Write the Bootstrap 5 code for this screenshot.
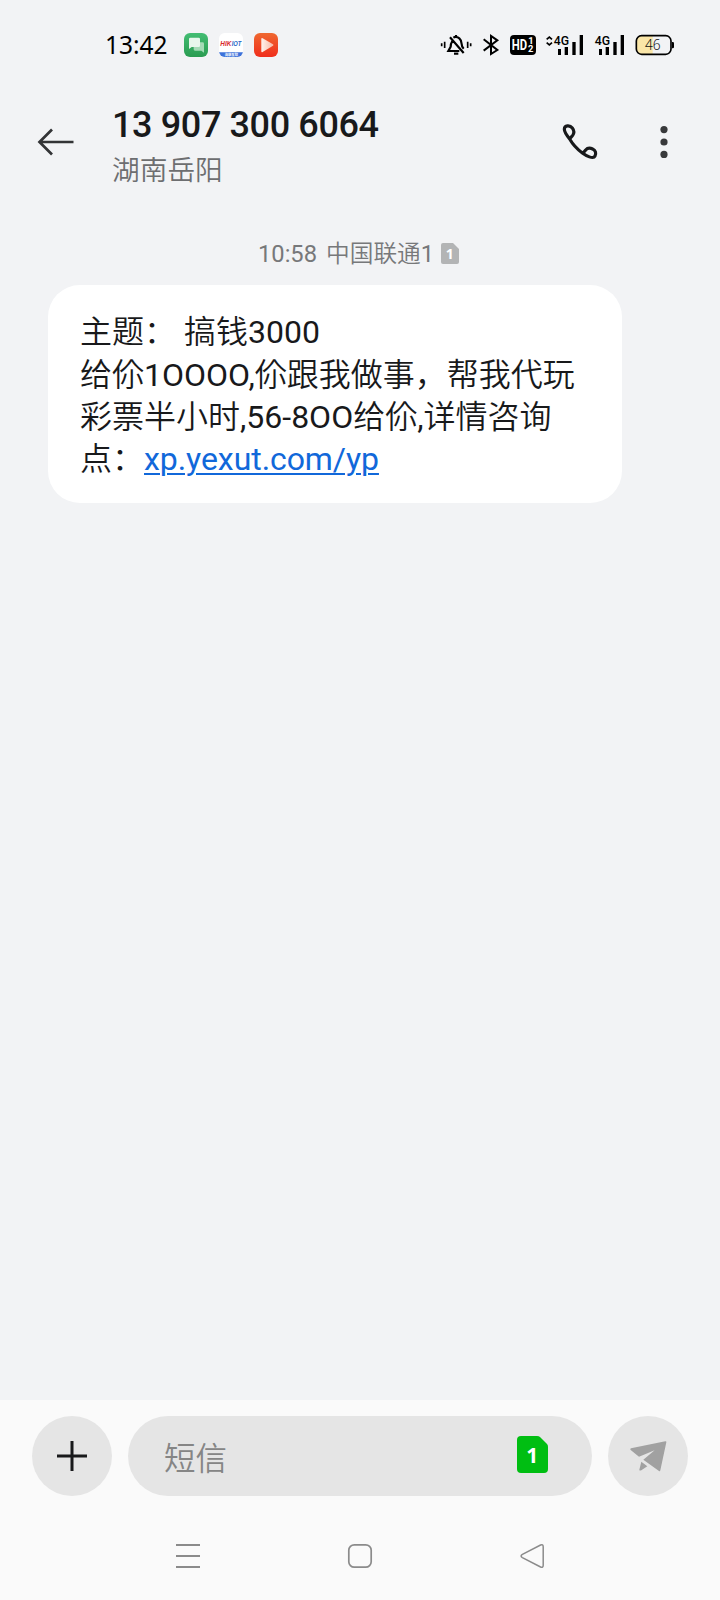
<!DOCTYPE html>
<html lang="zh-CN">
<head>
<meta charset="utf-8">
<meta name="viewport" content="width=device-width, initial-scale=1">
<title>13 907 300 6064</title>
<link href="https://cdn.jsdelivr.net/npm/bootstrap@5.3.0/dist/css/bootstrap.min.css" rel="stylesheet">
<style>
body{background:#f2f3f5;color:#18191b;font-family:Roboto,"Noto Sans CJK SC",sans-serif}
svg{display:block;flex:none;overflow:visible}
.phone-screen{width:720px;height:1600px}
.status-bar{height:90px;padding:0 45px 0 105px}
.clock{font:24.5px/24px "Noto Sans",sans-serif;width:79px;color:#000}
.top-bar{height:103px;padding-left:38px;padding-right:52px}
.contact{margin-left:38px;width:450px}
.contact h1{font-size:36px;font-weight:500;line-height:42px;margin:14px 0 0;letter-spacing:-.38px;color:#18191b}
.contact p{font-size:27.7px;line-height:40px;margin:5px 0 0;color:#6d6e70;font-weight:350}
.stamp{height:32px;margin-top:45px;padding-left:258px;font-size:23.7px;line-height:32px;color:#77787a}
.cjk{font-weight:350}
.cjk b{font-weight:400}
.bubble{width:574px;height:218px;margin:15px 0 0 48px;padding:26px 32px;border-radius:32px;font-size:32px}
.bubble p{line-height:42px;height:42px;margin:0;white-space:pre}
.bubble p:first-child{height:43px}
.bubble a{color:#1168da;text-decoration-thickness:2px;text-underline-offset:3px;letter-spacing:-.07px}
.dock{height:200px;background:#fafafa}
.composer{padding:16px 32px 0;gap:16px}
.pill{background:#e5e5e5;height:80px;border-radius:40px}
.round{width:80px}
.hint{font-size:31.5px;color:#858585;font-weight:350;padding-top:7px}
.sys-nav{height:122px;margin-top:-1px;padding:0 175px}
</style>
</head>
<body>
<main class="phone-screen d-flex flex-column overflow-hidden">
  <div class="status-bar d-flex align-items-center">
    <span class="clock">13:42</span>
    <div class="d-flex" style="gap:11px">
      <svg width="24" height="24" viewBox="0 0 72 72"><defs><linearGradient id="g" x2="0" y2="1"><stop stop-color="#43bd73"/><stop offset="1" stop-color="#2a9c51"/></linearGradient></defs><rect width="72" height="72" rx="18" fill="url(#g)"/><path d="M29 28h27a4 4 0 0 1 4 4v27l-8-6H33a4 4 0 0 1-4-4z" fill="#a4dbb6"/><path d="M19 14h25a4 4 0 0 1 4 4v20a4 4 0 0 1-4 4H23l-8 6V18a4 4 0 0 1 4-4z" fill="#e7f7ec"/></svg>
      <svg width="24" height="24" viewBox="0 0 72 72"><defs><clipPath id="c"><rect width="72" height="72" rx="17"/></clipPath></defs><g clip-path="url(#c)"><rect width="72" height="72" fill="#fff"/><path d="M0 58H72V72H0z" fill="#3d72da"/><text x="4" y="39" font-family="Liberation Sans,sans-serif" font-size="19" font-weight="700" font-style="italic" textLength="33" lengthAdjust="spacingAndGlyphs" fill="#d9292c">HIK</text><text x="38" y="39" font-family="Liberation Sans,sans-serif" font-size="19" font-weight="700" font-style="italic" textLength="29" lengthAdjust="spacingAndGlyphs" fill="#2866c5">IOT</text><text x="17" y="69" font-family="Noto Sans CJK SC,sans-serif" font-size="10" font-weight="700" fill="#fff">海康互联</text></g></svg>
      <svg width="24" height="24" viewBox="0 0 72 72"><defs><linearGradient id="r" x2="0" y2="1"><stop stop-color="#ef6830"/><stop offset="1" stop-color="#f02e1c"/></linearGradient><linearGradient id="w"><stop stop-color="#fff3ed"/><stop offset="1" stop-color="#f8b8a3"/></linearGradient></defs><rect width="72" height="72" rx="18" fill="url(#r)"/><path d="M22 18q0-4 4-2l31 18q3 2 0 4L26 57q-4 2-4-2z" fill="url(#w)"/></svg>
    </div>
    <div class="d-flex ms-auto" style="gap:10px">
      <svg width="32" height="22" viewBox="30 42 96 66" fill="none" stroke="#000" stroke-width="6.5"><path d="M35 70v9M44 65v19M113 65v19M122 70v9" stroke-width="5"/><path d="M60 52L101 99M67 63q-5 8-5 17l-7 13H88M70 53q9-5 18 2 7 6 7 17 0 8 6 14M78 51v-6"/><path d="M72 101h13"/></svg>
      <svg width="18" height="22" viewBox="156 42 54 66" fill="none" stroke="#000" stroke-width="6"><path d="M161 58L202 90 183 102V48L202 61 161 92"/></svg>
      <svg width="26" height="22" viewBox="240 42 78 66"><rect x="240" y="45" width="78" height="60" rx="12"/><g fill="#fff" font-family="Roboto,sans-serif" font-weight="700"><text x="245" y="91" font-size="42" textLength="46" lengthAdjust="spacingAndGlyphs">HD</text><text x="295" y="73" font-size="28">1</text><text x="294" y="97" font-size="28">2</text></g></svg>
      <svg width="39" height="22" viewBox="345 42 117 66" style="margin-left:-1px"><path d="M350 58l8-7 8 7M350 68l8 7 8-7" fill="none" stroke="#000" stroke-width="5"/><text x="371" y="75" font-family="Roboto,sans-serif" font-size="39" font-weight="500" textLength="46" lengthAdjust="spacingAndGlyphs">4G</text><path d="M384 87h9v18h-9zM404 81h10v24h-10zM427 66h10v39h-10zM449 45h10v60h-10z"/></svg>
      <svg width="31" height="22" viewBox="492 42 93 66"><text x="494" y="75" font-family="Roboto,sans-serif" font-size="39" font-weight="500" textLength="46" lengthAdjust="spacingAndGlyphs">4G</text><path d="M507 87h9v18h-9zM527 81h10v24h-10zM550 66h10v39h-10zM572 45h10v60h-10z"/></svg>
      <svg width="40" height="22" viewBox="615 42 120 66"><path d="M636 47h32v56h-32q-16 0-16-16V63q0-16 16-16z" fill="#fae6a8"/><rect x="619" y="47" width="104" height="56" rx="16" fill="none" stroke="#000" stroke-width="5"/><path d="M726 66h2q4 0 4 4v11q0 4-4 4h-2z"/><text x="645" y="90" font-family="Noto Sans,sans-serif" font-size="42" font-weight="350" textLength="47" lengthAdjust="spacingAndGlyphs" fill="#111">46</text></svg>
    </div>
  </div>

  <header class="top-bar d-flex align-items-center">
    <svg width="36" height="28" viewBox="0 0 36 28" fill="none" stroke="#333436" stroke-width="2.7"><path d="M1.5 14H35.5M14 1.5L1.5 14 14 26.5"/></svg>
    <div class="contact align-self-start"><h1>13 907 300 6064</h1><p>湖南岳阳</p></div>
    <svg width="36" height="36" viewBox="66 72 108 108" fill="none" stroke="#18191b" stroke-width="9.5" stroke-linejoin="round"><path d="M89 117C80 106 73 97 73 88c0-13 17-13 24-4 6 8 6 15 1 22-3 4-7 7-9 11q13 23 38 42c11 8 33 20 38 9 4-8 2-17-7-21-8-4-16-3-21 3-3 4-5 7-10 9"/></svg>
    <svg class="ms-auto" width="8" height="32" viewBox="0 0 8 32" fill="#38393b"><circle cx="4" cy="3.6" r="3.6"/><circle cx="4" cy="16" r="3.6"/><circle cx="4" cy="28.4" r="3.6"/></svg>
  </header>

  <div class="stamp d-flex align-items-center"><span>10:58</span><span class="cjk" style="margin-left:9px">中国联通<b>1</b></span>
    <svg width="18" height="22" viewBox="0 0 18 22" style="margin-left:7px"><path d="M2 0h10l6 6v13q0 2-2 2H2q-2 0-2-2V2q0-2 2-2z" fill="#b3b4b5"/><text x="4.8" y="15.8" font-family="Noto Sans,sans-serif" font-size="14" font-weight="700" fill="#fff">1</text></svg>
  </div>

  <section class="bubble bg-white cjk">
    <p>主题：<span style="margin-left:8px">搞钱</span><b>3000</b></p>
    <p>给伱<b>1OOOO,</b>伱跟我做事，帮我代玩</p>
    <p>彩票半小时<b>,56-8OO</b>给伱<b>,</b>详情咨询</p>
    <p>点：<a href="#"><b>xp.yexut.com/yp</b></a></p>
  </section>

  <footer class="dock mt-auto">
    <div class="composer d-flex">
      <div class="pill round d-flex align-items-center justify-content-center"><svg width="30" height="30" viewBox="0 0 30 30" stroke="#18191b" stroke-width="3"><path d="M15 0v30M0 15h30"/></svg></div>
      <div class="pill flex-grow-1 d-flex align-items-center justify-content-between" style="padding:0 44px 0 36px"><span class="hint">短信</span>
        <svg width="31" height="37" viewBox="0 0 31 37" style="margin-top:-3px"><path d="M4 0h16q2 0 3 1l7 7q1 1 1 3v22q0 4-4 4H4q-4 0-4-4V4q0-4 4-4z" fill="#00be12"/><text x="9.2" y="26.7" font-family="Noto Sans,sans-serif" font-size="21" font-weight="700" fill="#fff">1</text></svg></div>
      <div class="pill round d-flex align-items-center justify-content-center"><svg width="37" height="31" viewBox="449 155 111 93" fill="#a1a1a1"><path d="M452 177L555 156q4 0 3 3L540 243q-1 4-4 2L489 211 523 183 476 202 451 182q-3-3 1-5zM483 217L501 231 483 243q-6 2-6-2z"/></svg></div>
    </div>
    <nav class="sys-nav d-flex align-items-center justify-content-between">
      <svg width="26" height="26" viewBox="0 0 26 26" stroke="#8b8b8b" stroke-width="2"><path d="M1 2h24M1 13h24M1 24h24"/></svg>
      <svg width="26" height="26" viewBox="0 0 26 26" fill="none" stroke="#8b8b8b" stroke-width="1.7"><rect x="1.8" y="1.8" width="22.4" height="22.4" rx="5.5"/></svg>
      <svg width="26" height="26" viewBox="-1 0 26 26" fill="none" stroke="#8b8b8b" stroke-width="1.5"><path d="M2.4 11.4L20.6 2q2.6-1 2.6 1.8v18.4q0 2.8-2.6 1.8L2.4 14.6q-2.6-1.6 0-3.2z"/></svg>
    </nav>
  </footer>
</main>
<script src="https://cdn.jsdelivr.net/npm/bootstrap@5.3.0/dist/js/bootstrap.bundle.min.js"></script>
</body>
</html>
